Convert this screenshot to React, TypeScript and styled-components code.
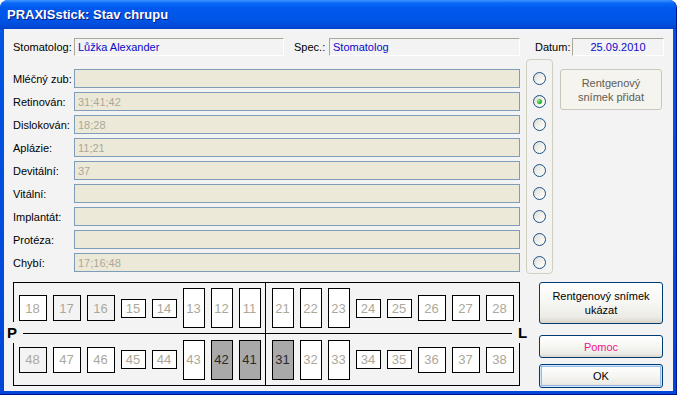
import React from "react";
import styled, { createGlobalStyle, css } from "styled-components";

const GlobalStyle = createGlobalStyle`
  html, body {
    margin: 0;
    padding: 0;
    background: #ffffff;
  }
  body {
    font-family: "Liberation Sans", Arial, sans-serif;
    font-size: 11px;
  }
`;

const Window = styled.div`
  width: 677px;
  height: 395px;
  box-sizing: border-box;
  display: flex;
  flex-direction: column;
  border-radius: 8px 8px 0 0;
  background: linear-gradient(180deg, #0058ee 0%, #0054e3 40px, #0046d8 100%);
  border-right: 1px solid #00138c;
  border-bottom: 1px solid #00138c;
  overflow: hidden;
`;

const TitleBar = styled.div`
  height: 29px;
  flex: none;
  display: flex;
  align-items: center;
  padding: 0 0 0 7px;
  background: linear-gradient(
    180deg,
    #3d95ff 0px,
    #0a6af7 3px,
    #0058ee 8px,
    #0055e5 20px,
    #0049d6 27px,
    #003cc4 29px
  );
  color: #ffffff;
  font-size: 13px;
  font-weight: bold;
  text-shadow: 1px 1px 0 #0a1883;
`;

const Client = styled.div`
  flex: 1;
  margin: 0 3px 3px 4px;
  background: #f3f3f3;
  padding: 9px 0 0 9px;
  display: flex;
  flex-direction: column;
  color: #000000;
`;

const TopRow = styled.div`
  height: 18px;
  display: flex;
  align-items: center;
`;

const Label = styled.span<{ $w: number; $ml?: number }>`
  width: ${(p) => p.$w}px;
  margin-left: ${(p) => p.$ml ?? 0}px;
  flex: none;
  white-space: nowrap;
`;

const StaticField = styled.div<{ $w: number; $center?: boolean }>`
  width: ${(p) => p.$w}px;
  height: 18px;
  box-sizing: border-box;
  flex: none;
  border-top: 1px solid #aca899;
  border-left: 1px solid #aca899;
  border-right: 1px solid #ffffff;
  border-bottom: 1px solid #ffffff;
  color: #0a0ac8;
  display: flex;
  align-items: center;
  padding: 0 3px;
  justify-content: ${(p) => (p.$center ? "center" : "flex-start")};
`;

const Middle = styled.div`
  display: flex;
  margin-top: 3px;
`;

const FormCol = styled.div`
  width: 507px;
  padding-top: 10px;
  display: flex;
  flex-direction: column;
  gap: 4px;
`;

const FormRow = styled.div`
  display: flex;
  align-items: center;
  height: 19px;
`;

const Field = styled.div`
  width: 446px;
  height: 19px;
  box-sizing: border-box;
  border: 1px solid #7f9db9;
  background: #ece9d8;
  color: #aca899;
  padding: 0 3px;
  display: flex;
  align-items: center;
`;

const RadioBox = styled.div`
  margin-left: 6px;
  width: 27px;
  height: 215px;
  box-sizing: border-box;
  border: 1px solid #d0d0bf;
  border-radius: 4px;
  display: flex;
  flex-direction: column;
  align-items: center;
  padding-top: 12px;
  gap: 10px;
`;

const Radio = styled.div<{ $checked?: boolean }>`
  width: 13px;
  height: 13px;
  box-sizing: border-box;
  border: 1px solid #1c5180;
  border-radius: 50%;
  background: linear-gradient(135deg, #dcdcd7 0%, #f4f4f0 60%, #ffffff 100%);
  display: flex;
  align-items: center;
  justify-content: center;
  &::after {
    content: "";
    display: ${(p) => (p.$checked ? "block" : "none")};
    width: 5px;
    height: 5px;
    border-radius: 50%;
    background: radial-gradient(circle at 35% 35%, #8ef28e 0%, #30b830 50%, #1a8f1a 100%);
  }
`;

const SideCol = styled.div`
  margin-left: 7px;
  padding-top: 10px;
`;

const Button = styled.div<{
  $w: number;
  $h: number;
  $mt?: number;
  $disabled?: boolean;
  $default?: boolean;
  $pink?: boolean;
}>`
  width: ${(p) => p.$w}px;
  height: ${(p) => p.$h}px;
  margin-top: ${(p) => p.$mt ?? 0}px;
  box-sizing: border-box;
  border: 1px solid #003c74;
  border-radius: 3px;
  background: linear-gradient(180deg, #ffffff 0%, #f6f6f2 50%, #ecebe5 85%, #d8d5c8 100%);
  display: flex;
  align-items: center;
  justify-content: center;
  text-align: center;
  line-height: 14px;
  color: ${(p) => (p.$pink ? "#f0148c" : "#000000")};
  ${(p) =>
    p.$disabled &&
    css`
      border-color: #c9c7ba;
      background: #f5f4ee;
      color: #5f5d54;
    `}
  ${(p) =>
    p.$default &&
    css`
      box-shadow: inset 0 0 0 1px #cee7ff, inset 0 0 0 2px #98b8ea;
    `}
`;

const Bottom = styled.div`
  display: flex;
  margin-top: 8px;
`;

const Chart = styled.div`
  position: relative;
  width: 507px;
  height: 104px;
  box-sizing: border-box;
  border: 1px solid #000000;
  display: flex;
  flex-direction: column;
`;

const Jaw = styled.div<{ $h: number }>`
  height: ${(p) => p.$h}px;
  display: grid;
  grid-template-columns: 252px 253px;
`;

const Quadrant = styled.div<{ $split?: boolean }>`
  display: flex;
  align-items: center;
  justify-content: center;
  gap: 6px;
  border-right: ${(p) => (p.$split ? "1px solid #000000" : "none")};
`;

const Divider = styled.div`
  height: 1px;
  background: #000000;
`;

const SideMark = styled.div<{ $left: number; $pad: number }>`
  position: absolute;
  left: ${(p) => p.$left}px;
  top: 39px;
  width: 16px;
  height: 21px;
  box-sizing: border-box;
  padding-left: ${(p) => p.$pad}px;
  background: #f3f3f3;
  display: flex;
  align-items: center;
  font-size: 15px;
  font-weight: bold;
  line-height: 1;
`;

const toothSize: Record<string, [number, number]> = {
  front: [22, 40],
  premolar: [25, 19],
  molar: [28, 26],
};

const Tooth = styled.div<{ $kind: string; $state: string }>`
  width: ${(p) => toothSize[p.$kind][0]}px;
  height: ${(p) => toothSize[p.$kind][1]}px;
  box-sizing: border-box;
  border: 1px solid #000000;
  display: flex;
  align-items: center;
  justify-content: center;
  font-size: 13px;
  color: ${(p) => (p.$state === "retained" ? "#2a2a2a" : "#aca899")};
  background: ${(p) =>
    p.$state === "retained" ? "#a9a9a9" : p.$state === "missing" ? "#f3f3f3" : "#ffffff"};
`;

const ButtonCol = styled.div`
  margin-left: 19px;
  display: flex;
  flex-direction: column;
`;

const rows: [string, string][] = [
  ["Mléčný zub:", ""],
  ["Retinován:", "31;41;42"],
  ["Dislokován:", "18;28"],
  ["Aplázie:", "11;21"],
  ["Devitální:", "37"],
  ["Vitální:", ""],
  ["Implantát:", ""],
  ["Protéza:", ""],
  ["Chybí:", "17;16;48"],
];

const missing = [17, 16, 48];
const retained = [31, 41, 42];

const kindOf = (n: number) => {
  const d = n % 10;
  if (d <= 3) return "front";
  if (d <= 5) return "premolar";
  return "molar";
};

const stateOf = (n: number) =>
  retained.includes(n) ? "retained" : missing.includes(n) ? "missing" : "normal";

const TeethRow = ({ teeth }: { teeth: number[] }) => (
  <>
    {teeth.map((n) => (
      <Tooth key={n} $kind={kindOf(n)} $state={stateOf(n)}>
        {n}
      </Tooth>
    ))}
  </>
);

export default function App() {
  return (
    <>
      <GlobalStyle />
      <Window>
        <TitleBar>PRAXISstick: Stav chrupu</TitleBar>
        <Client>
          <TopRow>
            <Label $w={61}>Stomatolog:</Label>
            <StaticField $w={210}>Lůžka Alexander</StaticField>
            <Label $w={35} $ml={10}>Spec.:</Label>
            <StaticField $w={191}>Stomatolog</StaticField>
            <Label $w={37} $ml={15}>Datum:</Label>
            <StaticField $w={92} $center>25.09.2010</StaticField>
          </TopRow>

          <Middle>
            <FormCol>
              {rows.map(([label, value]) => (
                <FormRow key={label}>
                  <Label $w={61}>{label}</Label>
                  <Field>{value}</Field>
                </FormRow>
              ))}
            </FormCol>
            <RadioBox>
              {rows.map(([label], i) => (
                <Radio key={label} $checked={i === 1} />
              ))}
            </RadioBox>
            <SideCol>
              <Button $w={102} $h={41} $disabled>
                Rentgenový
                <br />
                snímek přidat
              </Button>
            </SideCol>
          </Middle>

          <Bottom>
            <Chart>
              <Jaw $h={50}>
                <Quadrant $split>
                  <TeethRow teeth={[18, 17, 16, 15, 14, 13, 12, 11]} />
                </Quadrant>
                <Quadrant>
                  <TeethRow teeth={[21, 22, 23, 24, 25, 26, 27, 28]} />
                </Quadrant>
              </Jaw>
              <Divider />
              <Jaw $h={51}>
                <Quadrant $split>
                  <TeethRow teeth={[48, 47, 46, 45, 44, 43, 42, 41]} />
                </Quadrant>
                <Quadrant>
                  <TeethRow teeth={[31, 32, 33, 34, 35, 36, 37, 38]} />
                </Quadrant>
              </Jaw>
              <SideMark $left={-7} $pad={0}>P</SideMark>
              <SideMark $left={498} $pad={6}>L</SideMark>
            </Chart>
            <ButtonCol>
              <Button $w={124} $h={42}>
                Rentgenový snímek
                <br />
                ukázat
              </Button>
              <Button $w={124} $h={23} $mt={11} $pink>
                Pomoc
              </Button>
              <Button $w={124} $h={24} $mt={6} $default>
                OK
              </Button>
            </ButtonCol>
          </Bottom>
        </Client>
      </Window>
    </>
  );
}
